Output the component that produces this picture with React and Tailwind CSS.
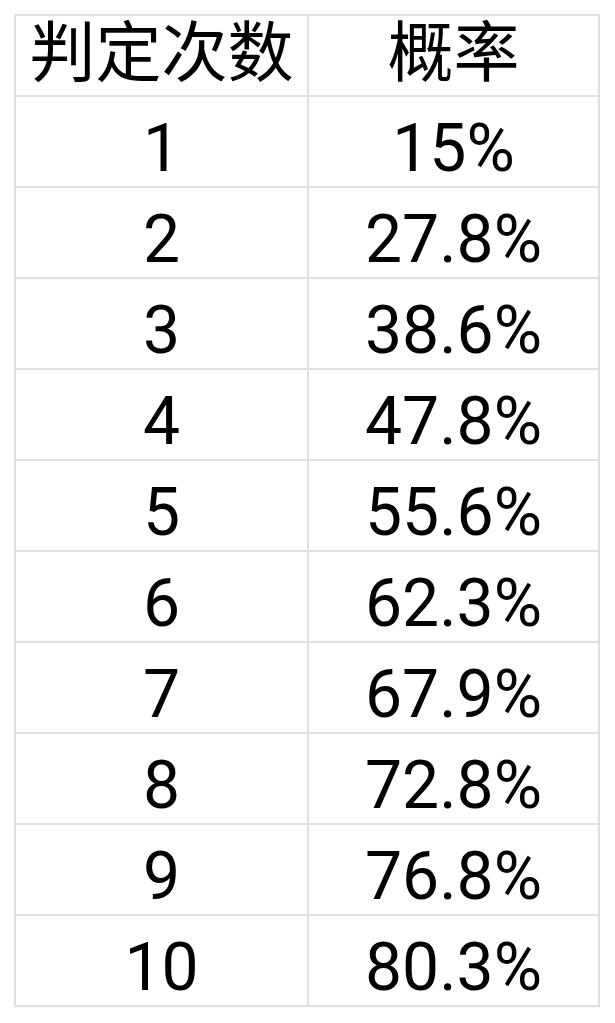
export default function App() {
  const rows = [
    ["1", "15%"],
    ["2", "27.8%"],
    ["3", "38.6%"],
    ["4", "47.8%"],
    ["5", "55.6%"],
    ["6", "62.3%"],
    ["7", "67.9%"],
    ["8", "72.8%"],
    ["9", "76.8%"],
    ["10", "80.3%"],
  ];
  const font = { fontFamily: 'Roboto, "Noto Sans CJK SC", sans-serif' };
  return (
    <div className="bg-white w-[615px] h-[1023px] pt-[14px] pl-[14px]" style={font}>
      <div className="w-[586px] border-2 border-[#e0e0e0] text-black text-[66px] leading-none">
        <div className="grid grid-cols-2 h-[79px]">
          <div className="flex justify-center pt-[5px]">判定次数</div>
          <div className="flex justify-center pt-[5px] border-l-2 border-[#e0e0e0]">概率</div>
        </div>
        {rows.map(([a, b]) => (
          <div key={a} className="grid grid-cols-2 h-[91px] border-t-2 border-[#e0e0e0]">
            <div className="flex justify-center pt-[19px]">{a}</div>
            <div className="flex justify-center pt-[19px] border-l-2 border-[#e0e0e0]">{b}</div>
          </div>
        ))}
      </div>
    </div>
  );
}
